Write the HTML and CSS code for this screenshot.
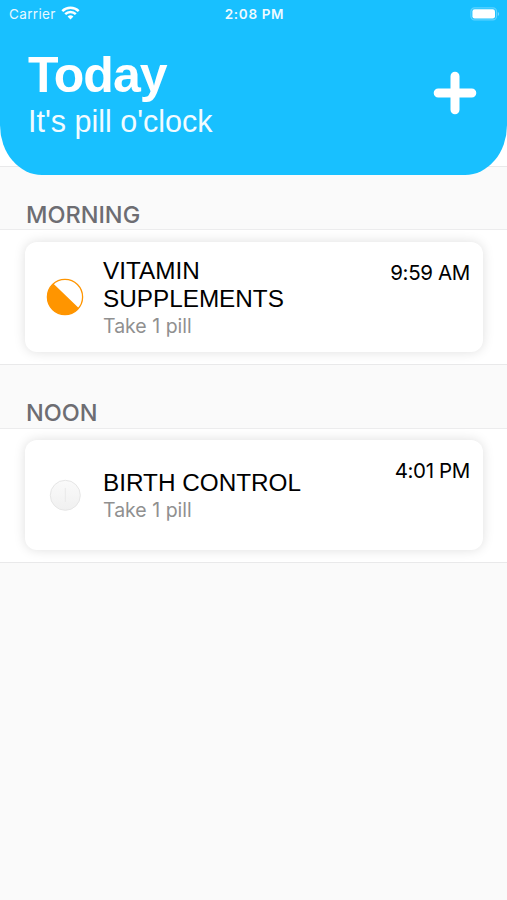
FILE: index.html
```html
<!DOCTYPE html>
<html lang="en">
<head>
<meta charset="utf-8">
<title>Today</title>
<link rel="stylesheet" href="styles.css">
</head>
<body>
<header class="header">
  <div class="status">
    <div class="status-left">
      <span class="carrier">Carrier</span>
      <svg class="wifi" width="19" height="14" viewBox="0 0 18 14" fill="none" stroke="#fff" stroke-width="2.5"><path d="M.8 5.1a11.7 11.7 0 0 1 16.4 0"/><path d="M3.7 8.2a7.5 7.5 0 0 1 10.6 0"/><path d="M9 13.5 6.1 10.6a4.1 4.1 0 0 1 5.8 0z" fill="#fff" stroke="none"/></svg>
    </div>
    <span class="clock">2:08 PM</span>
    <svg class="battery" width="30" height="14" viewBox="0 0 30 14"><rect x=".9" y=".9" width="25.6" height="12" rx="3.6" fill="none" stroke="#fff" stroke-opacity=".3" stroke-width="1.2"/><rect x="2.4" y="2.3" width="22.6" height="9.2" rx="2.2" fill="#fff"/><path d="M27.8 5v4c1.8-.8 1.8-3.2 0-4z" fill="#fff" fill-opacity=".4"/></svg>
  </div>
  <div class="heading">
    <div>
      <h1 class="title">Today</h1>
      <p class="subtitle">It's pill o'clock</p>
    </div>
    <svg class="add" width="44" height="44" viewBox="0 0 44 44" stroke="#fff" stroke-width="9" stroke-linecap="round"><path d="M22 5.2v33.6M5.2 22h33.6"/></svg>
  </div>
</header>
<main class="list">
  <h2 class="section first">MORNING</h2>
  <div class="row">
    <article class="card">
      <svg class="pill" width="38" height="38" viewBox="0 0 38 38"><circle cx="19" cy="19" r="17.6" fill="#fff" stroke="#ff9500" stroke-width="1.3"/><path d="M7.5 5.7A17.6 17.6 0 1 0 32.7 30.05z" fill="#ff9500"/></svg>
      <div class="info"><h3 class="name">VITAMIN SUPPLEMENTS</h3><p class="dose">Take 1 pill</p></div>
      <time class="time">9:59 AM</time>
    </article>
  </div>
  <h2 class="section">NOON</h2>
  <div class="row">
    <article class="card">
      <svg class="pill" width="38" height="38" viewBox="0 0 38 38"><defs><linearGradient id="tablet" x1="0" y1="0" x2="0" y2="1"><stop offset="0" stop-color="#fafafa"/><stop offset="1" stop-color="#f0f0f0"/></linearGradient></defs><circle cx="19.3" cy="19.3" r="15" fill="url(#tablet)" stroke="#e6e6e6"/><path d="M19.3 12v14" stroke="#e9e9e9"/></svg>
      <div class="info"><h3 class="name">BIRTH CONTROL</h3><p class="dose">Take 1 pill</p></div>
      <time class="time">4:01 PM</time>
    </article>
  </div>
</main>
</body>
</html>
```
FILE: styles.css
```css
* { box-sizing: border-box; }
body {
  margin: 0;
  min-height: 900px;
  background: linear-gradient(#fff 166px, #fafafa 166px);
  font-family: Inter, "Liberation Sans", sans-serif;
  color: #000;
}
h1, h2, h3, p { margin: 0; font-weight: 400; }
.header {
  position: relative;
  z-index: 1;
  height: 175px;
  background: #18c0ff;
  border-radius: 0 0 42px 42px / 0 0 50px 50px;
  color: #fff;
}
.status {
  display: grid;
  grid-template-columns: 1fr auto 1fr;
  align-items: center;
  height: 27px;
  padding: 0 7px 0 9px;
}
.status-left { display: flex; align-items: center; gap: 5px; }
.carrier { font-size: 13.5px; opacity: .9; letter-spacing: .35px; }
.wifi { margin-top: -2px; }
.clock { font-size: 13.5px; font-weight: 600; letter-spacing: .65px; opacity: .93; }
.battery { justify-self: end; }
.heading {
  display: flex;
  justify-content: space-between;
  padding: 21px 30px 0 28px;
  font-family: "Liberation Sans", Arial, sans-serif;
}
.title { font-size: 50px; line-height: 54px; font-weight: 700; letter-spacing: -1px; }
.subtitle { padding-top: 1px; font-size: 30.5px; line-height: 36px; opacity: .94; }
.add { margin-top: 23px; }
.list { margin-top: -9px; }
.section {
  display: flex;
  align-items: flex-end;
  height: 65px;
  padding: 0 26px 1px;
  border-top: 1px solid #e9e9ea;
  border-bottom: 1px solid #ececed;
  background: #fafafa;
  color: #6d6d72;
  font-size: 23.5px;
  line-height: 28px;
  font-weight: 500;
}
.first { height: 64px; padding-bottom: 0; }
.row { height: 134px; padding: 12px 24px 12px 25px; background: #fff; }
.section + .row:last-child { height: 133px; padding-top: 11px; box-shadow: 0 1px #e9e9ea; }
.card {
  display: flex;
  align-items: center;
  height: 110px;
  padding: 0 13px 0 21px;
  border-radius: 12px;
  background: #fff;
  box-shadow: 0 0 12px rgba(0, 0, 0, .13);
}
.pill { flex: none; }
.info { width: 200px; margin-left: 19px; padding-top: 2px; }
.name { font-family: "Liberation Sans", Arial, sans-serif; font-size: 24.3px; line-height: 28px; }
.dose { padding-top: 1px; font-size: 19.5px; line-height: 25px; color: #909090; }
.time { align-self: flex-start; margin: 18px 0 0 auto; font-size: 20.5px; line-height: 25px; letter-spacing: -.35px; white-space: nowrap; }
```
